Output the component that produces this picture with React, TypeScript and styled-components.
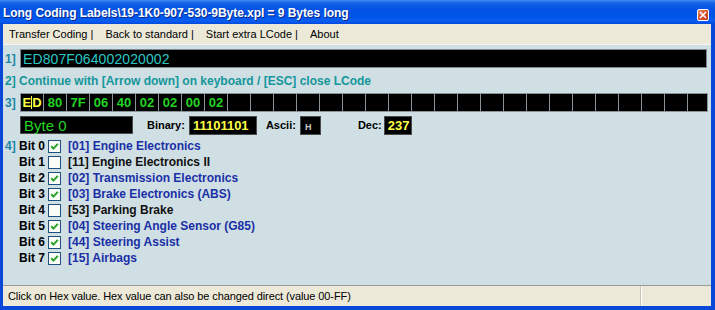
import React from "react";
import styled, { createGlobalStyle } from "styled-components";

const Global = createGlobalStyle`
  html, body { margin: 0; padding: 0; background: #ffffff; }
  #root { width: 715px; height: 310px; }
`;

const Window = styled.div`
  width: 715px;
  height: 310px;
  display: flex;
  flex-direction: column;
  background: #0848d8;
  box-sizing: border-box;
  font-family: "Liberation Sans", Arial, sans-serif;
  overflow: hidden;
`;

const TitleBar = styled.div`
  height: 24px;
  flex: none;
  display: flex;
  align-items: center;
  justify-content: space-between;
  padding: 2px 6px 0 3px;
  box-sizing: border-box;
  background: linear-gradient(
    to bottom,
    #3f8cf3 0%,
    #1664e8 12%,
    #0453e6 35%,
    #0055ea 70%,
    #0a5df0 88%,
    #0048dc 100%
  );
`;

const Title = styled.span`
  color: #ffffff;
  font-weight: bold;
  font-size: 12px;
  letter-spacing: -0.05px;
  text-shadow: 1px 1px 0 #0a2a8a;
  white-space: nowrap;
`;

const CloseButton = styled.div`
  width: 12px;
  height: 12px;
  margin-top: 4px;
  border: 1px solid #ffffff;
  border-radius: 2px;
  background: linear-gradient(135deg, #e88a6c 0%, #d9502e 50%, #c23c1c 100%);
  display: flex;
  align-items: center;
  justify-content: center;
  box-sizing: border-box;
`;

const Frame = styled.div`
  flex: 1;
  display: flex;
  flex-direction: column;
  margin: 0 4px 4px 3px;
  min-height: 0;
`;

const MenuBar = styled.div`
  height: 20px;
  flex: none;
  background: #ece9d8;
  display: flex;
  align-items: center;
  padding-left: 6px;
  font-size: 11px;
  color: #000;
`;

const MenuItem = styled.span`
  padding: 0 12px 0 0;
  white-space: nowrap;
`;

const Content = styled.div`
  flex: 1;
  background: #cfdfe4;
  border-top: 1px solid #f4f4f4;
  border-bottom: 1px solid #9a9a9a;
  display: flex;
  flex-direction: column;
  padding: 3px 0 0 2px;
  box-sizing: border-box;
`;

const Row = styled.div<{ $h: number; $mt?: number }>`
  display: flex;
  align-items: center;
  height: ${(p) => p.$h}px;
  margin-top: ${(p) => p.$mt ?? 0}px;
  flex: none;
`;

const Num = styled.span<{ $w?: number }>`
  width: ${(p) => p.$w ?? 15}px;
  flex: none;
  color: #1a86a8;
  font-weight: bold;
  font-size: 12px;
`;

const HexField = styled.div`
  width: 687px;
  height: 19px;
  background: #000;
  border: 1px solid #7c8a90;
  box-sizing: border-box;
  color: #2bc8c4;
  font-size: 14px;
  display: flex;
  align-items: center;
  padding-left: 2px;
  letter-spacing: 0.1px;
`;

const Hint = styled.span`
  color: #14969a;
  font-weight: bold;
  font-size: 12px;
  white-space: nowrap;
`;

const CellStrip = styled.div`
  width: 688px;
  height: 19px;
  display: flex;
  background: #8a9498;
  border: 1px solid #8a9498;
  box-sizing: border-box;
  gap: 1px;
  overflow: hidden;
`;

const Cell = styled.div<{ $active?: boolean }>`
  width: 22px;
  flex: none;
  background: #000;
  color: ${(p) => (p.$active ? "#ffff44" : "#22d422")};
  font-size: 13px;
  font-weight: bold;
  display: flex;
  align-items: center;
  justify-content: center;
`;

const Caret = styled.span`
  display: inline-block;
  width: 1px;
  height: 13px;
  background: #ffff44;
`;

const InfoRow = styled.div`
  display: flex;
  align-items: center;
  height: 18px;
  margin-top: 4px;
  padding-left: 15px;
  flex: none;
`;

const ByteBox = styled.div`
  width: 113px;
  height: 18px;
  background: #000;
  color: #22d422;
  font-size: 15px;
  display: flex;
  align-items: center;
  padding-left: 3px;
  box-sizing: border-box;
  border: 1px solid #4a4a4a;
`;

const Caption = styled.span<{ $ml: number; $mr: number }>`
  margin-left: ${(p) => p.$ml}px;
  margin-right: ${(p) => p.$mr}px;
  font-weight: bold;
  font-size: 11px;
  color: #000;
`;

const ValueBox = styled.div<{ $w: number; $small?: boolean }>`
  width: ${(p) => p.$w}px;
  height: 19px;
  background: #000;
  color: ${(p) => (p.$small ? "#c8c8c8" : "#ffff44")};
  font-size: ${(p) => (p.$small ? 9 : 13)}px;
  font-weight: bold;
  display: flex;
  align-items: center;
  padding-left: ${(p) => (p.$small ? 4 : 3)}px;
  padding-top: ${(p) => (p.$small ? 3 : 0)}px;
  box-sizing: border-box;
  border: 1px solid #4a4a4a;
`;

const BitList = styled.div`
  display: flex;
  flex-direction: column;
  margin-top: 4px;
`;

const BitRow = styled.div`
  display: flex;
  align-items: center;
  height: 16px;
`;

const BitLabel = styled.span`
  width: 29px;
  flex: none;
  font-weight: bold;
  font-size: 12px;
  color: #000;
  white-space: nowrap;
`;

const Check = styled.div`
  width: 13px;
  height: 13px;
  flex: none;
  background: #fbfbf8;
  border: 1px solid #1c5180;
  box-sizing: border-box;
  display: flex;
  align-items: center;
  justify-content: center;
`;

const BitText = styled.span<{ $on: boolean }>`
  margin-left: 7px;
  font-size: 12px;
  font-weight: bold;
  color: ${(p) => (p.$on ? "#1a2fa6" : "#101010")};
  white-space: nowrap;
`;

const StatusBar = styled.div`
  height: 20px;
  flex: none;
  background: #ece9d8;
  display: flex;
  align-items: center;
  font-size: 11px;
  color: #000;
`;

const StatusText = styled.div`
  width: 638px;
  padding-left: 5px;
  height: 100%;
  display: flex;
  align-items: center;
  border-right: 1px solid #c8c4b0;
  box-sizing: border-box;
  white-space: nowrap;
  letter-spacing: -0.1px;
`;

const StatusPanel = styled.div`
  flex: 1;
  height: 100%;
  border-left: 1px solid #ffffff;
`;

const hexBytes = ["ED", "80", "7F", "06", "40", "02", "02", "00", "02"];

const bits: { label: string; on: boolean }[] = [
  { label: "[01] Engine Electronics", on: true },
  { label: "[11] Engine Electronics II", on: false },
  { label: "[02] Transmission Electronics", on: true },
  { label: "[03] Brake Electronics (ABS)", on: true },
  { label: "[53] Parking Brake", on: false },
  { label: "[04] Steering Angle Sensor (G85)", on: true },
  { label: "[44] Steering Assist", on: true },
  { label: "[15] Airbags", on: true },
];

const CheckMark = () => (
  <svg width="9" height="9" viewBox="0 0 9 9">
    <path d="M1.2 4.2 L3.4 6.6 L7.8 1.8" fill="none" stroke="#22a422" strokeWidth="1.8" />
  </svg>
);

export default function App() {
  return (
    <>
      <Global />
      <Window>
        <TitleBar>
          <Title>Long Coding Labels\19-1K0-907-530-9Byte.xpl = 9 Bytes long</Title>
          <CloseButton>
            <svg width="8" height="8" viewBox="0 0 8 8">
              <path d="M1 1 L7 7 M7 1 L1 7" stroke="#ffffff" strokeWidth="1.6" />
            </svg>
          </CloseButton>
        </TitleBar>
        <Frame>
          <MenuBar>
            <MenuItem>Transfer Coding |</MenuItem>
            <MenuItem>Back to standard |</MenuItem>
            <MenuItem>Start extra LCode |</MenuItem>
            <MenuItem>About</MenuItem>
          </MenuBar>
          <Content>
            <Row $h={19} $mt={1}>
              <Num>1]</Num>
              <HexField>ED807F064002020002</HexField>
            </Row>
            <Row $h={25}>
              <Hint>2] Continue with [Arrow down] on keyboard / [ESC] close LCode</Hint>
            </Row>
            <Row $h={19}>
              <Num>3]</Num>
              <CellStrip>
                {Array.from({ length: 30 }).map((_, i) => (
                  <Cell key={i} $active={i === 0}>
                    {i === 0 ? (
                      <>
                        E<Caret />D
                      </>
                    ) : (
                      hexBytes[i] ?? ""
                    )}
                  </Cell>
                ))}
              </CellStrip>
            </Row>
            <InfoRow>
              <ByteBox>Byte 0</ByteBox>
              <Caption $ml={14} $mr={4}>Binary:</Caption>
              <ValueBox $w={68}>11101101</ValueBox>
              <Caption $ml={9} $mr={4}>Ascii:</Caption>
              <ValueBox $w={21} $small>H</ValueBox>
              <Caption $ml={37} $mr={2}>Dec:</Caption>
              <ValueBox $w={28}>237</ValueBox>
            </InfoRow>
            <BitList>
              {bits.map((b, i) => (
                <BitRow key={i}>
                  <Num $w={14}>{i === 0 ? "4]" : ""}</Num>
                  <BitLabel>Bit {i}</BitLabel>
                  <Check>{b.on && <CheckMark />}</Check>
                  <BitText $on={b.on}>{b.label}</BitText>
                </BitRow>
              ))}
            </BitList>
          </Content>
          <StatusBar>
            <StatusText>Click on Hex value. Hex value can also be changed direct (value 00-FF)</StatusText>
            <StatusPanel />
          </StatusBar>
        </Frame>
      </Window>
    </>
  );
}
